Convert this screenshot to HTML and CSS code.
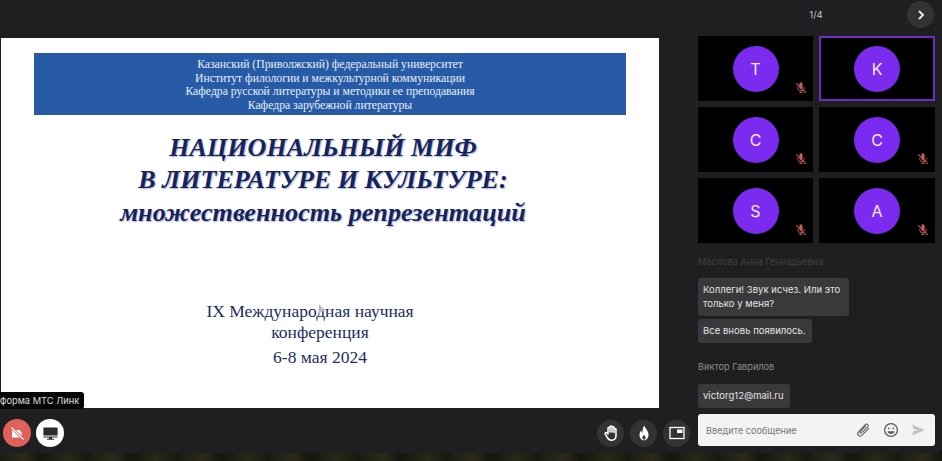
FILE: index.html
```html
<!DOCTYPE html>
<html lang="ru">
<head>
    <meta charset="utf-8">
    <title>МТС Линк</title>
    <link rel="stylesheet" href="styles.css">
</head>
<body>
    <svg class="icon-defs" width="0" height="0">
        <symbol id="mic-off" viewBox="0 0 12 12">
            <path d="M4.4 1.9a1.6 1.6 0 0 1 3.2 0v3.4a1.6 1.6 0 0 1-3.2 0z" fill="currentColor"/>
            <path d="M2.6 4.8v.6a3.4 3.4 0 0 0 6.8 0v-.6M6 8.8v1.6M4.4 10.6h3.2" fill="none" stroke="currentColor" stroke-width=".9"/>
            <path d="M1.2 1.4l9.6 9.4" fill="none" stroke="currentColor" stroke-width="1.1"/>
        </symbol>
    </svg>

    <div class="app">
        <div class="stage">
            <div class="slide">
                <div class="slide-band">
                    <div>Казанский (Приволжский) федеральный университет</div>
                    <div>Институт филологии и межкультурной коммуникации</div>
                    <div>Кафедра русской литературы и методики ее преподавания</div>
                    <div>Кафедра зарубежной литературы</div>
                </div>
                <div class="slide-title">
                    <div>НАЦИОНАЛЬНЫЙ МИФ</div>
                    <div>В ЛИТЕРАТУРЕ И КУЛЬТУРЕ:</div>
                    <div class="slide-subtitle">множественность репрезентаций</div>
                </div>
                <div class="slide-conf">
                    <div class="slide-conf-first">IX Международная научная</div>
                    <div>конференция</div>
                    <div class="slide-date">6-8 мая 2024</div>
                </div>
                <svg class="pointer" width="8" height="12" viewBox="0 0 8 12"><path d="M1 0v10l2.4-2.2L7.5 7z" fill="#b9b9c2"/></svg>
            </div>
            <div class="tooltip">форма МТС Линк</div>
            <div class="controls">
                <div class="controls-group">
                    <button class="round round-red">
                        <svg width="17" height="17" viewBox="0 0 17 17">
                            <path d="M3 5h7.5l2 2.2V12.5H3z" fill="#fff"/>
                            <path d="M2.5 2.5l12 12" stroke="#e0605c" stroke-width="2.6"/>
                            <path d="M2.5 2.5l12 12" stroke="#fff" stroke-width="1.1"/>
                        </svg>
                    </button>
                    <button class="round round-white">
                        <svg width="17" height="17" viewBox="0 0 17 17">
                            <path d="M2 2.5h13a.6.6 0 0 1 .6.6v7.3H1.4V3.100a.6.6 0 0 1 .6-.6z" fill="#2a2a2d"/>
                            <path d="M1.4 11.400h14.200v1H1.400zM7 12.400h3v1.400H7zM5 13.800h7v1H5z" fill="#2a2a2d"/>
                        </svg>
                    </button>
                </div>
                <div class="controls-group controls-right">
                    <button class="round round-dark">
                        <svg width="18" height="18" viewBox="0 0 18 18" fill="none" stroke="#fff" stroke-width="1.5" stroke-linecap="round" stroke-linejoin="round">
                            <path d="M6 9V4.200a1 1 0 0 1 2 0V8M8 8V2.900a1 1 0 0 1 2 0V8M10 8V3.600a1 1 0 0 1 2 0V8.500M12 8.500V5.400a1 1 0 0 1 2 0v6.100c0 2.800-1.900 4.700-4.500 4.700-2.200 0-3.300-1-4.300-2.800L3.200 10a1.100 1.100 0 0 1 1.800-1.200L6 10"/>
                        </svg>
                    </button>
                    <button class="round round-dark">
                        <svg width="18" height="18" viewBox="0 0 18 18">
                            <path d="M9.300 1.500c.5 2.600 4.200 4.700 4.200 9.200 0 3.200-2 5.500-4.500 5.500s-4.500-2.200-4.500-5.300c0-2 .9-3.400 1.700-4.400.2 1.200.6 2 1.300 2.400C7.300 5.700 8 3.300 9.300 1.500z" fill="#fff"/>
                            <path d="M9 10.500c.3 1.100 1.600 1.800 1.600 3.300 0 1.100-.7 1.900-1.600 1.900s-1.600-.8-1.600-1.900c0-1.400 1.300-2 1.600-3.300z" fill="#3a3a3c"/>
                        </svg>
                    </button>
                    <button class="round round-dark">
                        <svg width="18" height="18" viewBox="0 0 18 18">
                            <rect x="2" y="3.500" width="14" height="11" fill="none" stroke="#fff" stroke-width="1.300"/>
                            <rect x="9" y="5.500" width="5.500" height="3.500" fill="#fff"/>
                        </svg>
                    </button>
                </div>
            </div>
        </div>

        <div class="sidebar">
            <div class="pager">
                <span class="pager-count">1/4</span>
                <button class="pager-next">
                    <svg width="10" height="12" viewBox="0 0 10 12"><path d="M3 2l4 4-4 4" fill="none" stroke="#eee" stroke-width="1.800"/></svg>
                </button>
            </div>
            <div class="tiles">
                <div class="tile"><span class="avatar">T</span><svg class="mic"><use href="#mic-off"/></svg></div>
                <div class="tile tile-active"><span class="avatar">K</span></div>
                <div class="tile"><span class="avatar">C</span><svg class="mic"><use href="#mic-off"/></svg></div>
                <div class="tile"><span class="avatar">C</span><svg class="mic"><use href="#mic-off"/></svg></div>
                <div class="tile"><span class="avatar">S</span><svg class="mic"><use href="#mic-off"/></svg></div>
                <div class="tile"><span class="avatar">A</span><svg class="mic"><use href="#mic-off"/></svg></div>
            </div>
            <div class="chat">
                <div class="author author-faded">Маслова Анна Геннадьевна</div>
                <div class="bubble">Коллеги! Звук исчез. Или это только у меня?</div>
                <div class="bubble">Все вновь появилось.</div>
                <div class="author author-next">Виктор Гаврилов</div>
                <div class="bubble">victorg12@mail.ru</div>
            </div>
            <div class="composer">
                <span class="composer-hint">Введите сообщение</span>
                <svg width="16" height="16" viewBox="0 0 16 16" fill="none" stroke="#6d6d70" stroke-width="1.200" stroke-linecap="round">
                    <path d="M13.500 6.500l-6 6.300c-1.300 1.300-3 1.500-4 .5s-.8-2.700.5-4l6-6.500c.9-.9 2-1 2.700-.3s.6 1.800-.3 2.700L6.800 10.600c-.5.5-1.100.6-1.500.2s-.3-1 .2-1.500l5-5.300"/>
                </svg>
                <svg width="16" height="16" viewBox="0 0 16 16" fill="none" stroke="#5a5a5d" stroke-width="1.300">
                    <circle cx="8" cy="8" r="6.400"/>
                    <circle cx="5.700" cy="6.300" r=".9" fill="#5a5a5d" stroke="none"/>
                    <circle cx="10.300" cy="6.300" r=".9" fill="#5a5a5d" stroke="none"/>
                    <path d="M4.500 9.200h7c-.3 1.800-1.700 2.800-3.500 2.800s-3.200-1-3.500-2.800z" fill="#5a5a5d" stroke="none"/>
                </svg>
                <svg width="15" height="14" viewBox="0 0 15 14"><path d="M1 1.500L14 7 1 12.500l1.500-4.500L8 7 2.500 6z" fill="#c2c2c4"/></svg>
            </div>
        </div>
    </div>
    <div class="ground"></div>
</body>
</html>
```

FILE: styles.css
```css
html, body {
    margin: 0;
    height: 461px;
    overflow: hidden;
    background: #12130f;
    font-family: Inter, "Noto Sans", sans-serif;
}
.icon-defs {
    display: block;
    height: 0;
}
button {
    border: none;
    padding: 0;
    cursor: pointer;
}
.app {
    display: flex;
    height: 453px;
    background: #1f1f21;
    border-bottom-right-radius: 6px;
}
.stage {
    position: relative;
    width: 698px;
    padding-top: 38px;
    box-sizing: border-box;
}

/* slide */
.slide {
    position: relative;
    box-sizing: border-box;
    width: 658px;
    height: 370px;
    margin-left: 1px;
    padding: 15px 33px 0;
    background: #fff;
    font-family: "Liberation Serif", serif;
    text-align: center;
}
.slide-band {
    height: 62px;
    padding-top: 5px;
    box-sizing: border-box;
    background: #275ba7;
    color: #e9eef7;
    font-size: 11.700px;
    line-height: 13.700px;
}
.slide-title {
    margin: 17px 0 0 -14px;
    color: #14245f;
    font-size: 26.100px;
    font-weight: bold;
    font-style: italic;
    line-height: 32px;
    text-shadow: 1px 1px 1.500px rgba(20, 36, 95, 0.35);
}
.slide-subtitle {
    font-size: 26.200px;
    line-height: 33px;
}
.slide-conf {
    margin: 72px 0 0 -20px;
    color: #1d2d5e;
    font-size: 17.500px;
    line-height: 21px;
}
.slide-conf-first {
    margin-left: -20px;
}
.slide-date {
    margin-top: 4px;
}
.pointer {
    position: absolute;
    left: 317px;
    top: 266px;
}
.tooltip {
    position: absolute;
    left: 0;
    top: 392px;
    width: 78px;
    padding-right: 6px;
    height: 17px;
    line-height: 17px;
    white-space: nowrap;
    background: #060606;
    border-radius: 0 3px 3px 0;
    color: #dcdcdc;
    font-size: 9.300px;
}

/* bottom controls */
.controls {
    display: flex;
    justify-content: space-between;
    align-items: center;
    padding: 11px 8px 0 3px;
}
.controls-group {
    display: flex;
    align-items: center;
    gap: 5px;
}
.controls-right {
    gap: 6px;
}
.round {
    display: flex;
    align-items: center;
    justify-content: center;
    width: 28px;
    height: 28px;
    border-radius: 50%;
}
.round-red {
    background: #e0605c;
}
.round-white {
    background: #fff;
}
.round-dark {
    width: 27px;
    height: 27px;
    background: #333335;
}

/* sidebar */
.sidebar {
    display: flex;
    flex-direction: column;
    flex: 1;
    padding-right: 7px;
}
.pager {
    position: relative;
    height: 36px;
    color: #c8c8c8;
    font-size: 9.500px;
    line-height: 29px;
    text-align: center;
}
.pager-count {
    margin-left: -1px;
}
.pager-next {
    position: absolute;
    right: 1px;
    top: 1px;
    display: flex;
    align-items: center;
    justify-content: center;
    width: 27px;
    height: 27px;
    border-radius: 50%;
    background: #333335;
}
.tiles {
    display: grid;
    grid-template-columns: 115px 116px;
    grid-auto-rows: 65px;
    gap: 6px 6px;
}
.tile {
    position: relative;
    display: flex;
    align-items: center;
    justify-content: center;
    box-sizing: border-box;
    background: #000;
}
.tile-active {
    border: 2px solid #6f2bc4;
}
.avatar {
    display: flex;
    align-items: center;
    justify-content: center;
    width: 46px;
    height: 46px;
    border-radius: 50%;
    background: #7a2bef;
    color: #f2e9ff;
    font-size: 16px;
}
.mic {
    position: absolute;
    right: 6px;
    bottom: 7px;
    width: 12px;
    height: 12px;
    color: #c85d58;
}

/* chat */
.chat {
    flex: 1;
    display: flex;
    flex-direction: column;
    align-items: flex-start;
    gap: 3px;
    padding-top: 13px;
}
.author {
    margin-bottom: 7px;
    font-size: 9.200px;
    line-height: 12px;
    color: #8b8b8e;
}
.author-faded {
    color: #404044;
}
.author-next {
    margin-top: 15px;
    margin-bottom: 8px;
}
.bubble {
    box-sizing: border-box;
    max-width: 151px;
    padding: 5px 6px 5px 5px;
    border-radius: 3px;
    background: #39393b;
    color: #e4e4e4;
    font-size: 9.500px;
    line-height: 14px;
    letter-spacing: 0.03px;
}
.composer {
    display: flex;
    align-items: center;
    gap: 12px;
    height: 32px;
    margin-bottom: 7px;
    padding: 0 9px 0 8px;
    background: #f3f3f3;
    border-radius: 3px;
}
.composer-hint {
    flex: 1;
    color: #77777a;
    font-size: 9.200px;
}

/* blurred wallpaper under the window */
.ground {
    height: 8px;
    background: repeating-linear-gradient(90deg, #1b1c13 0, #2b2a1b 23px, #14150f 41px, #262a18 67px, #17170f 90px);
}
```
